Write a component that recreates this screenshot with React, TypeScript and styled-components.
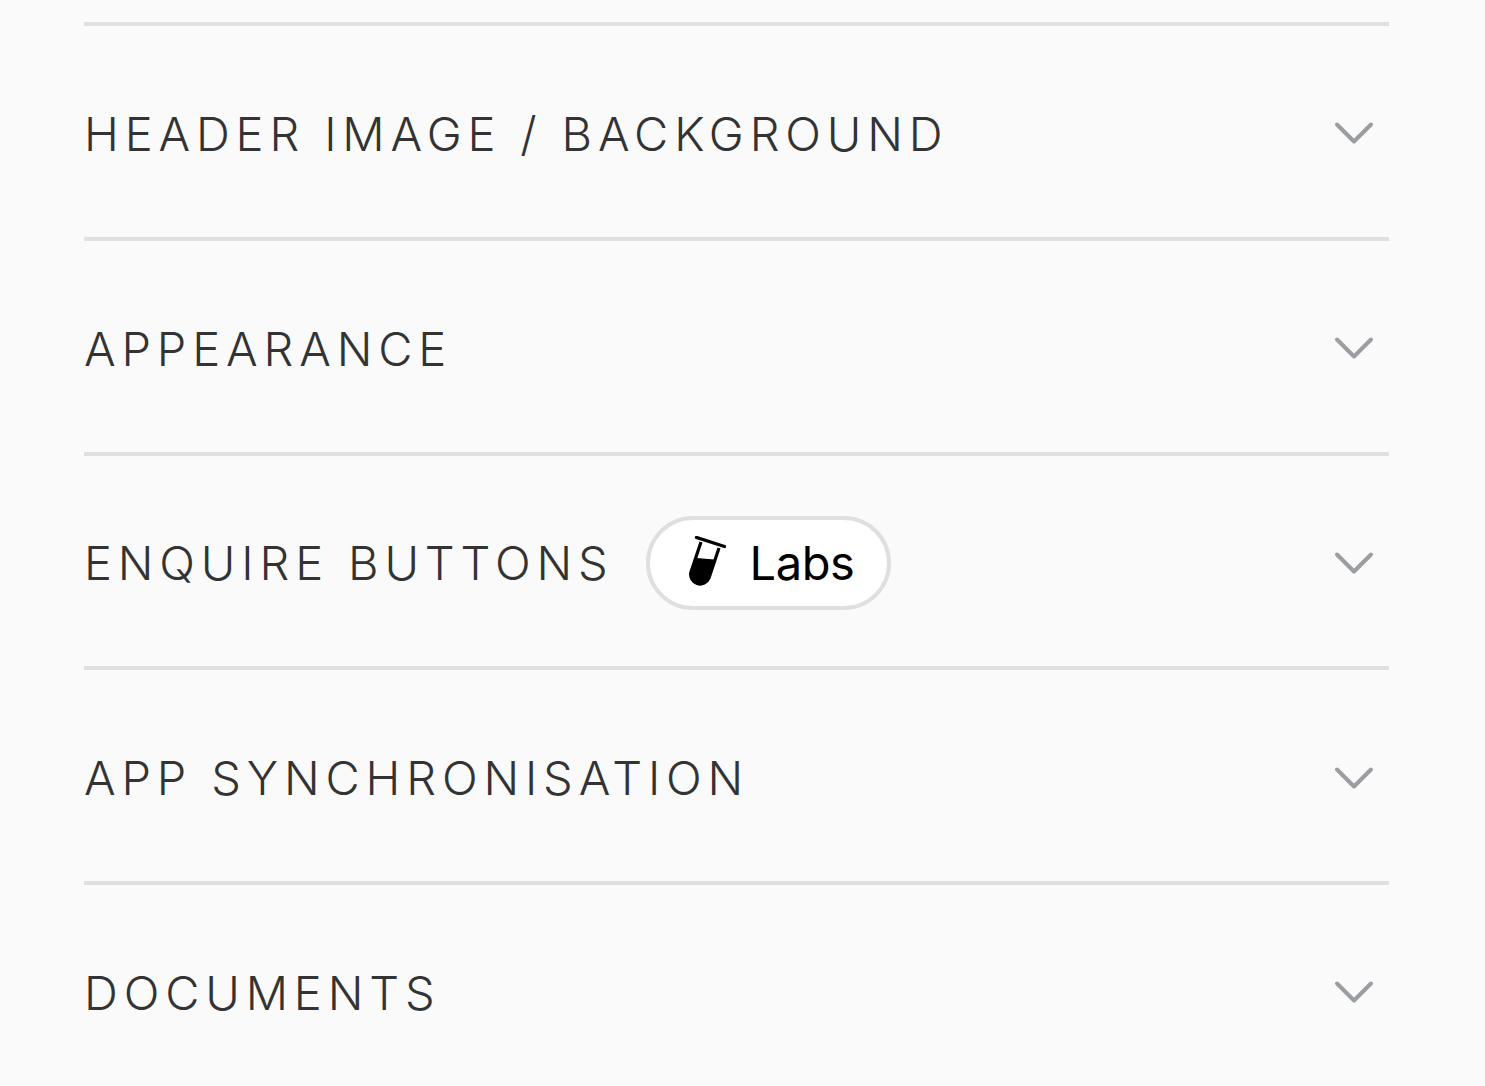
import React from "react";
import styled, { createGlobalStyle } from "styled-components";

const GlobalStyle = createGlobalStyle`
	html, body {
		margin: 0;
		padding: 0;
		background: #fafafa;
	}
`;

const Page = styled.div`
	width: 1485px;
	height: 1086px;
	overflow: hidden;
	box-sizing: border-box;
	padding: 22px 96px 0 84px;
	background: #fafafa;
	font-family: Inter, Lato, sans-serif;
`;

const Row = styled.div`
	display: flex;
	align-items: center;
	box-sizing: border-box;
	height: 214.75px;
	border-top: 4px solid #e0e0e0;
	padding: 4px 15px 0 0;
`;

const Title = styled.div`
	font-size: 47px;
	font-weight: 270;
	line-height: 1;
	letter-spacing: 5.85px;
	color: #333;
	white-space: nowrap;
`;

const Badge = styled.div`
	display: flex;
	align-items: center;
	gap: 24px;
	box-sizing: border-box;
	height: 94px;
	margin-left: 32px;
	padding: 0 33px 0 38px;
	border: 4px solid #dfdfdf;
	border-radius: 47px;
	background: #fff;
	color: #000;
	font-size: 47px;
	font-weight: 400;
	letter-spacing: -0.4px;
`;

const Chevron = styled.svg`
	flex: none;
	margin-left: auto;
	width: 40px;
	height: 24px;
	fill: none;
	stroke: #9a9da1;
	stroke-width: 4;
	stroke-linecap: round;
	stroke-linejoin: round;
`;

const Flask = styled.svg`
	flex: none;
	width: 38px;
	height: 50px;
	margin-bottom: 4px;
`;

function LabsIcon() {
	return (
		<Flask viewBox="0 0 38 50">
			<path d="M8.5 1.5 L36.5 10.5" stroke="#000" strokeWidth="3.4" strokeLinecap="round" fill="none" />
			<path d="M13 6 L3 36 A9.5 9.5 0 0 0 21 42 L31 12" stroke="#000" strokeWidth="3.2" fill="none" />
			<path d="M8.5 22 L26.5 23.5 L21 42 A9.5 9.5 0 0 1 3 36 Z" fill="#000" />
		</Flask>
	);
}

const sections = [
	{ title: "HEADER IMAGE / BACKGROUND" },
	{ title: "APPEARANCE" },
	{ title: "ENQUIRE BUTTONS", labs: true },
	{ title: "APP SYNCHRONISATION" },
	{ title: "DOCUMENTS" },
];

export default function App() {
	return (
		<>
			<GlobalStyle />
			<Page>
				{sections.map((section) => (
					<Row key={section.title}>
						<Title>{section.title}</Title>
						{section.labs && (
							<Badge>
								<LabsIcon />
								Labs
							</Badge>
						)}
						<Chevron viewBox="0 0 40 24">
							<path d="M3 3.5 L20 20.5 L37 3.5" />
						</Chevron>
					</Row>
				))}
			</Page>
		</>
	);
}
